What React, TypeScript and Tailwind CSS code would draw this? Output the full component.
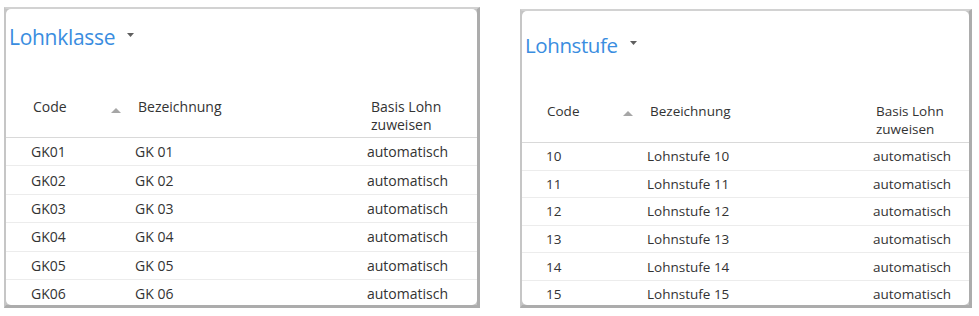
type Row = { code: string; name: string; basis: string };

const lohnklassen: Row[] = ["01", "02", "03", "04", "05", "06"].map((n) => ({
  code: "GK" + n,
  name: "GK " + n,
  basis: "automatisch",
}));

const lohnstufen: Row[] = ["10", "11", "12", "13", "14", "15"].map((n) => ({
  code: n,
  name: "Lohnstufe " + n,
  basis: "automatisch",
}));

const Caret = () => (
  <svg width="7" height="4" viewBox="0 0 7 4" className="ml-[12px] mt-[-4px]">
    <path d="M0 0 L7 0 L3.5 4 Z" fill="#5f5f5f" />
  </svg>
);

const SortUp = () => (
  <svg width="10" height="5" viewBox="0 0 10 5">
    <path d="M0 5 L10 5 L5 0 Z" fill="#a6a6a6" />
  </svg>
);

const Grid = ({
  title,
  rows,
  wide,
}: {
  title: string;
  rows: Row[];
  wide: boolean;
}) => {
  return (
    <div
      className={
        wide
          ? "w-[476px] h-[301px] mt-[7px] bg-[#c4c4c4] border-t-2 border-l-2 border-r-[3px] border-b-[3px] border-t-[#d2d2d2] border-l-[#c6c6c6] border-r-[#acacac] border-b-[#acacac]"
          : "w-[452px] h-[299px] mt-[9px] bg-[#c4c4c4] border-t-2 border-l-2 border-r-[3px] border-b-[3px] border-t-[#d2d2d2] border-l-[#c6c6c6] border-r-[#acacac] border-b-[#acacac]"
      }
    >
      <div className="h-full bg-white rounded-[5px] overflow-hidden flex flex-col text-[#333333] font-['Open_Sans',sans-serif]">
        <div
          className={
            wide
              ? "flex shrink-0 items-center pl-[3px] pt-[13px] h-[43px] text-[21px] text-[#3a8de0] tracking-[-0.3px]"
              : "flex shrink-0 items-center pl-[3px] pt-[19px] h-[49px] text-[20.5px] text-[#3a8de0] tracking-[-0.4px]"
          }
        >
          <span className="leading-[30px]">{title}</span>
          <Caret />
        </div>
        <div
          className={
            wide
              ? "flex shrink-0 pt-[46px] h-[86px] border-b border-[#d9d9d9] text-[14px] leading-[18px]"
              : "flex shrink-0 pt-[42px] h-[83px] border-b border-[#d9d9d9] text-[13.5px] leading-[18px]"
          }
        >
          <div className={wide ? "w-[105px] pl-[27px]" : "w-[101px] pl-[25px]"}>Code</div>
          <div className={wide ? "w-[27px] pt-[10px]" : "w-[27px] pt-[9px]"}>
            <SortUp />
          </div>
          <div className={wide ? "w-[233px]" : "w-[226px]"}>Bezeichnung</div>
          <div>
            Basis Lohn
            <br />
            zuweisen
          </div>
        </div>
        {rows.map((r) => (
          <div
            key={r.code}
            className={
              wide
                ? "flex items-center h-[28.4px] shrink-0 border-b border-[#ececec] text-[14px]"
                : "flex items-center h-[27.6px] shrink-0 border-b border-[#ececec] text-[13.5px]"
            }
          >
            <div className={wide ? "w-[129px] pl-[25px]" : "w-[125px] pl-[24px]"}>{r.code}</div>
            <div className={wide ? "w-[232px]" : "w-[226px]"}>{r.name}</div>
            <div>{r.basis}</div>
          </div>
        ))}
      </div>
    </div>
  );
};

export default function App() {
  return (
    <div className="w-[979px] h-[316px] bg-white flex items-start pl-[4px] gap-[40px]">
      <Grid title="Lohnklasse" rows={lohnklassen} wide={true} />
      <Grid title="Lohnstufe" rows={lohnstufen} wide={false} />
    </div>
  );
}
